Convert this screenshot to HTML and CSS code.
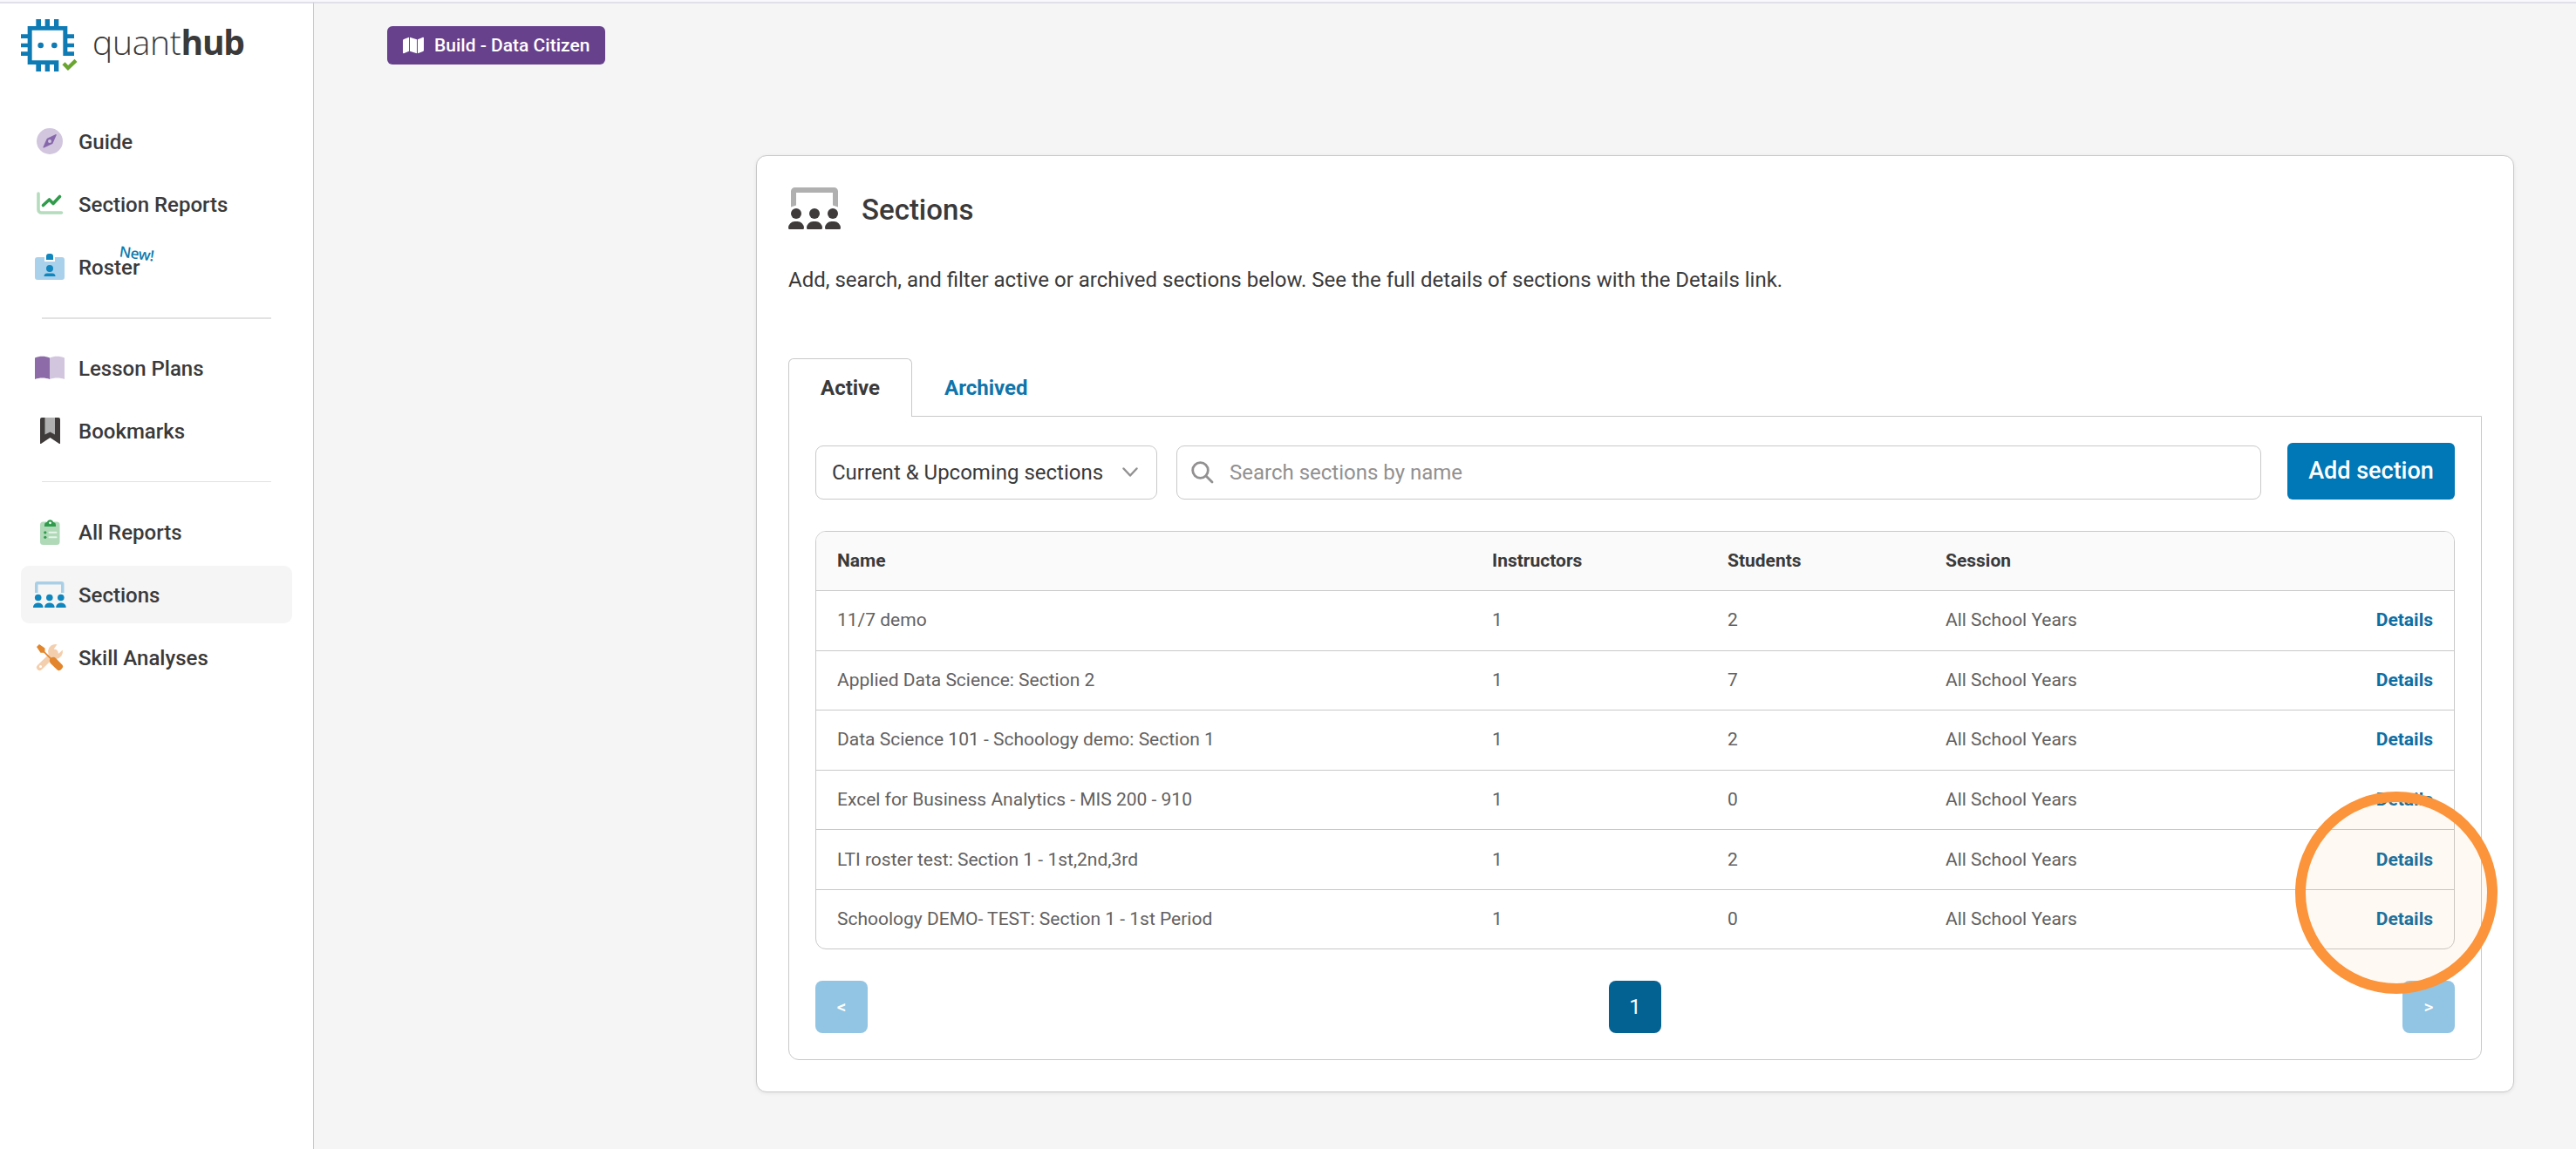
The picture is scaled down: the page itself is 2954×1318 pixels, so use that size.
FILE: index.html
```html
<!DOCTYPE html>
<html lang="en">
<head>
    <meta charset="UTF-8">
    <meta name="viewport" content="width=device-width, initial-scale=1.0">
    <title>Sections - QuantHub</title>
    <link rel="stylesheet" href="styles.css">
</head>
<body>
    <div class="layout">
        <aside class="sidebar">
            <div class="logo">
                <svg width="65" height="60" viewBox="72 66 195 180">
                    <g fill="#0f7bb5">
                        <path d="M95 90H232V178H255V192H217V104H110V208H202V246H186V222H95Z"/>
                        <path d="M124 66h17v25h-17zM155 66h16v25h-16zM186 66h16v25h-16zM124 221h17v25h-17zM155 221h16v25h-16z"/>
                        <path d="M72 118h24v14h-24zM72 149h24v14h-24zM72 178h24v14h-24zM231 118h24v14h-24zM231 149h24v14h-24z"/>
                        <circle cx="140" cy="156" r="10"/>
                        <circle cx="187" cy="156" r="10"/>
                    </g>
                    <path d="M219 218L234 234L261 208" fill="none" stroke="#69a52f" stroke-width="13"/>
                </svg>
                <span class="logo-text">quant<b>hub</b></span>
            </div>

            <nav class="nav">
                <a class="nav-item">
                    <svg class="nav-icon" viewBox="0 0 40 36">
                        <circle cx="20" cy="18" r="15" fill="#d2c6df"/>
                        <path d="M27.6 11.2c.4-.9-.3-1.3-1-1l-9 4.2c-.5.3-.9.6-1.100 1.100l-4 9c-.4.9.3 1.300 1 1l9-4.200c.5-.2.900-.6 1.100-1.100zM20 16a2 2 0 1 1 0 4 2 2 0 0 1 0-4z" fill="#8767ab"/>
                    </svg>
                    <span class="nav-label">Guide</span>
                </a>
                <a class="nav-item">
                    <svg class="nav-icon" viewBox="0 0 40 36" fill="none" stroke-linecap="round" stroke-linejoin="round">
                        <path d="M7 5.500V24a3.500 3.500 0 0 0 3.500 3.500H33.500" transform="translate(0 .5)" stroke="#b5dcbd" stroke-width="3.600"/>
                        <path d="M12.500 19.500L19.500 13L24 17.500L31.500 9.500" stroke="#2f9b4b" stroke-width="3.600"/>
                    </svg>
                    <span class="nav-label">Section Reports</span>
                </a>
                <a class="nav-item">
                    <svg class="nav-icon" viewBox="0 0 40 36">
                        <rect x="3" y="7" width="34" height="26" rx="3" fill="#a9d1ec"/>
                        <rect x="14" y="7" width="12" height="5" fill="#fff"/>
                        <path d="M16 10V6a3 3 0 0 1 3-3h2a3 3 0 0 1 3 3v4zM20 16a4 4 0 1 1 0 8 4 4 0 0 1 0-8zM13.500 29a3.500 3.500 0 0 1 3.500-3.500h6a3.500 3.500 0 0 1 3.500 3.500z" fill="#0f86bd"/>
                    </svg>
                    <span class="nav-label">Roster</span>
                    <span class="new-tag">New!</span>
                </a>
                <hr class="divider thick">
                <a class="nav-item">
                    <svg class="nav-icon" viewBox="0 0 40 36">
                        <path d="M3 6.500c5-2.500 12-2.500 17 0V31c-5-2-12-2-17 0z" fill="#8d6ba9"/>
                        <path d="M20 6.500c5-2.500 12-2.500 17 0V31c-5-2-12-2-17 0z" fill="#d2c6df"/>
                    </svg>
                    <span class="nav-label">Lesson Plans</span>
                </a>
                <a class="nav-item">
                    <svg class="nav-icon" viewBox="0 0 40 36">
                        <path d="M9 5a2 2 0 0 1 2-2H30a2 2 0 0 1 2 2V32.500c0 .5-.5.700-1 .4L20.500 26 10 32.900c-.5.3-1 .1-1-.4z" fill="#3f3b3b"/>
                        <path d="M14.500 3H26V22.500L20.500 19.500 14.500 22.500z" fill="#b1b0b0"/>
                    </svg>
                    <span class="nav-label">Bookmarks</span>
                </a>
                <hr class="divider">
                <a class="nav-item">
                    <svg class="nav-icon" viewBox="0 0 40 36">
                        <rect x="9" y="6.500" width="22.500" height="26.500" rx="3.500" fill="#afd9b7"/>
                        <path d="M14 12V10a3 3 0 0 1 2.500-3h.500a3.600 3.600 0 0 1 7 0h.500a3 3 0 0 1 2.500 3v2z" fill="#2f9b4b"/>
                        <circle cx="20.500" cy="7.800" r="1.400" fill="#fff"/>
                        <path d="M19.500 18.800h8M19.500 24.300h8" stroke="#e7f4e9" stroke-width="2" stroke-linecap="round"/>
                        <circle cx="14.800" cy="18.800" r="1.600" fill="#2f9b4b"/>
                        <circle cx="14.800" cy="24.300" r="1.600" fill="#2f9b4b"/>
                    </svg>
                    <span class="nav-label">All Reports</span>
                </a>
                <a class="nav-item active">
                    <svg class="nav-icon" viewBox="0 0 40 36">
                        <path d="M3 16V6a3 3 0 0 1 3-3H33.500a3 3 0 0 1 3 3V16H33V6.500H6.500V16z" fill="#a9cfe6"/>
                        <g fill="#0f86bd">
                            <circle cx="6.700" cy="21.500" r="3.800"/>
                            <circle cx="19.800" cy="21.500" r="3.800"/>
                            <circle cx="32.800" cy="21.500" r="3.800"/>
                            <path d="M1 33a5 5 0 0 1 5-5.500h1.500a5 5 0 0 1 5 5.500zM14.100 33a5 5 0 0 1 5-5.500h1.500a5 5 0 0 1 5 5.500zM27.200 33a5 5 0 0 1 5-5.500h1.500a5 5 0 0 1 5 5.500z"/>
                        </g>
                    </svg>
                    <span class="nav-label">Sections</span>
                </a>
                <a class="nav-item">
                    <svg class="nav-icon" viewBox="0 0 40 36">
                        <path d="M8.500 29.500L26 12.500" stroke="#f4cfae" stroke-width="7" stroke-linecap="round"/>
                        <path d="M28.500 3.200A8.500 8.500 0 1 0 34.800 9.500L30.500 13.500 26.500 12.500 25 8z" fill="#f4cfae"/>
                        <circle cx="9.500" cy="28.500" r="1.500" fill="#fff"/>
                        <path d="M5 6L8 3L14.500 7.500V11.500L21.500 18.500C24 17.300 25.800 18 27 19L34.300 26.500C36 28.500 35 30 33.500 31.500C32 33 30.500 34 28.500 32.300L21 25C20 23.500 19.300 22 20.300 19.700L13.200 12.800H9.500Z" fill="#e2852c"/>
                    </svg>
                    <span class="nav-label">Skill Analyses</span>
                </a>
            </nav>
        </aside>

        <main class="main">
            <button class="badge-btn">
                <svg width="24" height="20" viewBox="0 0 24 20" fill="#fff">
                    <path d="M0 4.500C0 3.800.4 3.200 1 3L7 .7V16.800L1 19.200C.5 19.400 0 19 0 18.500zM8 .7L16 3.200V19.300L8 16.800zM17 3.200L23 .8C23.500.6 24 1 24 1.500V15.500C24 16.200 23.600 16.800 23 17L17 19.300z"/>
                </svg>
                <span>Build - Data Citizen</span>
            </button>

            <section class="card">
                <div class="card-header">
                    <svg width="60" height="48" viewBox="0 0 60 48">
                        <path d="M3 22.500V4.500A4.500 4.500 0 0 1 7.500 0H52.500A4.500 4.500 0 0 1 57 4.500V22.500L51 20.500V6H9V20.500z" fill="#b1b0b0"/>
                        <g fill="#3f3b3b">
                            <circle cx="9" cy="30" r="6"/>
                            <circle cx="30" cy="30" r="6"/>
                            <circle cx="51" cy="30" r="6"/>
                            <path d="M0 46.500A7.500 7.500 0 0 1 7.500 39h3A7.500 7.500 0 0 1 18 46.500Q18 48 16.500 48H1.500Q0 48 0 46.500zM21 46.500A7.500 7.500 0 0 1 28.500 39h3A7.500 7.500 0 0 1 39 46.500Q39 48 37.500 48H22.500Q21 48 21 46.500zM42 46.500A7.500 7.500 0 0 1 49.500 39h3A7.500 7.500 0 0 1 60 46.500Q60 48 58.500 48H43.500Q42 48 42 46.500z"/>
                        </g>
                    </svg>
                    <h1>Sections</h1>
                </div>
                <p class="description">Add, search, and filter active or archived sections below. See the full details of sections with the Details link.</p>

                <div class="tabs">
                    <a class="tab selected">Active</a>
                    <a class="tab">Archived</a>
                </div>

                <div class="panel">
                    <div class="filters">
                        <div class="select">
                            <span>Current &amp; Upcoming sections</span>
                            <svg width="18" height="12" viewBox="0 0 18 12" fill="none" stroke="#929090" stroke-width="2.400" stroke-linecap="round" stroke-linejoin="round">
                                <path d="M1.500 1.500L9 9.500L16.500 1.500"/>
                            </svg>
                        </div>
                        <div class="search">
                            <svg width="26" height="26" viewBox="0 0 26 26" fill="none" stroke="#929090" stroke-width="2.800" stroke-linecap="round">
                                <circle cx="10.500" cy="10.500" r="8.800"/>
                                <path d="M17 17L24 24"/>
                            </svg>
                            <span>Search sections by name</span>
                        </div>
                        <button class="add-btn">Add section</button>
                    </div>

                    <table class="sections-table">
                        <thead>
                            <tr><th>Name</th><th>Instructors</th><th>Students</th><th>Session</th><th></th></tr>
                        </thead>
                        <tbody>
                            <tr><td>11/7 demo</td><td>1</td><td>2</td><td>All School Years</td><td><a>Details</a></td></tr>
                            <tr><td>Applied Data Science: Section 2</td><td>1</td><td>7</td><td>All School Years</td><td><a>Details</a></td></tr>
                            <tr><td>Data Science 101 - Schoology demo: Section 1</td><td>1</td><td>2</td><td>All School Years</td><td><a>Details</a></td></tr>
                            <tr><td>Excel for Business Analytics - MIS 200 - 910</td><td>1</td><td>0</td><td>All School Years</td><td><a>Details</a></td></tr>
                            <tr><td>LTI roster test: Section 1 - 1st,2nd,3rd</td><td>1</td><td>2</td><td>All School Years</td><td><a>Details</a></td></tr>
                            <tr><td>Schoology DEMO- TEST: Section 1 - 1st Period</td><td>1</td><td>0</td><td>All School Years</td><td><a>Details</a></td></tr>
                        </tbody>
                    </table>

                    <div class="pagination">
                        <button class="page-btn" disabled>&lt;</button>
                        <button class="page-btn current">1</button>
                        <button class="page-btn" disabled>&gt;</button>
                    </div>
                </div>
                <div class="highlight-ring"></div>
            </section>
        </main>
    </div>
</body>
</html>
```
FILE: styles.css
```css
* {
    box-sizing: border-box;
}

body {
    margin: 0;
    background-color: #f5f5f5;
    color: #3b3a3a;
    font-family: Roboto, "Liberation Sans", sans-serif;
    font-size: 24px;
}

.layout {
    display: flex;
    height: 1318px;
    border-top: 2px solid #f8f8fd;
}

button {
    border: none;
    font-family: inherit;
    color: white;
}

/* Sidebar */
.sidebar {
    width: 360px;
    background: white;
    border-top: 2px solid #e1dfea;
    border-right: 1px solid #cacaca;
}

.logo {
    display: flex;
    gap: 17px;
    padding: 18px 0 0 24px;
    height: 125px;
}

.logo-text {
    font-family: "Open Sans", sans-serif;
    font-size: 39px;
    font-weight: 300;
    line-height: 52px;
    letter-spacing: -0.3px;
}

.logo-text b {
    font-weight: 700;
    letter-spacing: -1.2px;
}

.nav {
    display: flex;
    flex-direction: column;
    gap: 6px;
    padding: 0 24px;
}

.nav-item {
    position: relative;
    display: flex;
    align-items: center;
    gap: 13px;
    width: 311px;
    height: 66px;
    padding-left: 13px;
    border-radius: 9px;
    font-weight: 500;
}

.nav-item.active {
    background-color: #f5f5f5;
}

.nav-icon {
    width: 40px;
    height: 36px;
}

.nav-label {
    padding-top: 2px;
}

.new-tag {
    position: absolute;
    left: 113px;
    top: 6px;
    color: #0f7bab;
    font-family: "Open Sans", sans-serif;
    font-size: 17px;
    font-weight: 600;
    line-height: 24px;
    letter-spacing: -0.6px;
    transform: rotate(8deg);
}

.divider {
    width: 263px;
    height: 1px;
    margin: 19px 24px 18px;
    border: none;
    background: #e2e2e2;
}

.divider.thick {
    height: 2px;
    margin: 19px 24px 17px;
}

/* Main area */
.main {
    flex: 1;
    padding: 26px 71px 0 84px;
    border-top: 2px solid #e1dfea;
}

.badge-btn {
    display: flex;
    align-items: center;
    gap: 12px;
    width: 250px;
    height: 44px;
    padding: 0 0 0 18px;
    border-radius: 6px;
    background-color: #68418d;
    font-size: 21px;
    font-weight: 500;
}

.card {
    position: relative;
    height: 1075px;
    margin: 104px 0 0 423px;
    padding: 36px 36px 0;
    background: white;
    border: 1px solid #c9c9c9;
    border-radius: 12px;
    box-shadow: 0 1px 4px rgba(0, 0, 0, 0.08);
}

.card-header {
    display: flex;
    align-items: center;
    gap: 24px;
    height: 48px;
}

h1 {
    margin: 3px 0 0;
    font-size: 33px;
    font-weight: 500;
}

.description {
    margin: 40px 0 0;
    line-height: 36px;
}

/* Tabs */
.tabs {
    display: flex;
    height: 67px;
    margin-top: 72px;
}

.tab {
    padding: 0 36px;
    border: 1px solid transparent;
    color: #0f75ab;
    font-weight: 700;
    font-size: 24px;
    line-height: 66px;
}

.tab.selected {
    width: 142px;
    z-index: 1;
    background: white;
    border-color: #c9c9c9;
    border-bottom: none;
    border-radius: 6px 6px 0 0;
    color: #3b3a3a;
}

.panel {
    height: 739px;
    margin-top: -1px;
    padding: 30px;
    border: 1px solid #c9c9c9;
    border-radius: 0 0 12px 12px;
}

.filters {
    display: flex;
    align-items: flex-end;
    height: 65px;
}

.select,
.search {
    display: flex;
    align-items: center;
    height: 62px;
    border: 1px solid #c9c9c9;
    border-radius: 9px;
}

.select {
    justify-content: space-between;
    width: 392px;
    margin-right: 22px;
    padding: 0 21px 0 18px;
}

.search {
    flex: 1;
    gap: 18px;
    margin-right: 30px;
    padding-left: 16px;
    color: #929090;
}

.add-btn {
    width: 192px;
    height: 65px;
    padding: 0 0 2px;
    border-radius: 6px;
    background-color: #0077b6;
    font-size: 27px;
    font-weight: 500;
}

/* Sections table */
.sections-table {
    display: block;
    margin-top: 36px;
    overflow: hidden;
    border: 1px solid #c9c9c9;
    border-radius: 12px;
    font-size: 21px;
}

.sections-table tbody,
.sections-table thead {
    display: block;
}

.sections-table tr {
    display: grid;
    grid-template-columns: 751px 270px 250px 1fr auto;
    align-items: center;
    height: 68.6px;
    padding: 0 24px;
    border-bottom: 1px solid #c9c9c9;
}

.sections-table thead tr {
    height: 68px;
    background-color: #fafafa;
}

.sections-table tbody tr:last-child {
    height: 67px;
    border-bottom: none;
}

.sections-table th,
.sections-table td {
    padding: 0 0 1px;
    text-align: left;
}

.sections-table td {
    color: #636161;
}

.sections-table a {
    color: #0f6fa3;
    font-weight: 700;
}

.pagination {
    display: flex;
    justify-content: space-between;
    margin-top: 36px;
}

.page-btn {
    width: 60px;
    height: 60px;
    padding: 0;
    border-radius: 8px;
    background-color: #92c5e3;
    font-size: 21px;
    font-weight: 500;
}

.page-btn.current {
    background-color: #046293;
    font-size: 24px;
    font-weight: 400;
}

/* Callout over the Details links */
.highlight-ring {
    position: absolute;
    right: 18px;
    top: 729px;
    width: 232px;
    height: 232px;
    border: 12px solid #fb943b;
    border-radius: 50%;
    background-color: rgba(251, 148, 59, 0.06);
}
```
